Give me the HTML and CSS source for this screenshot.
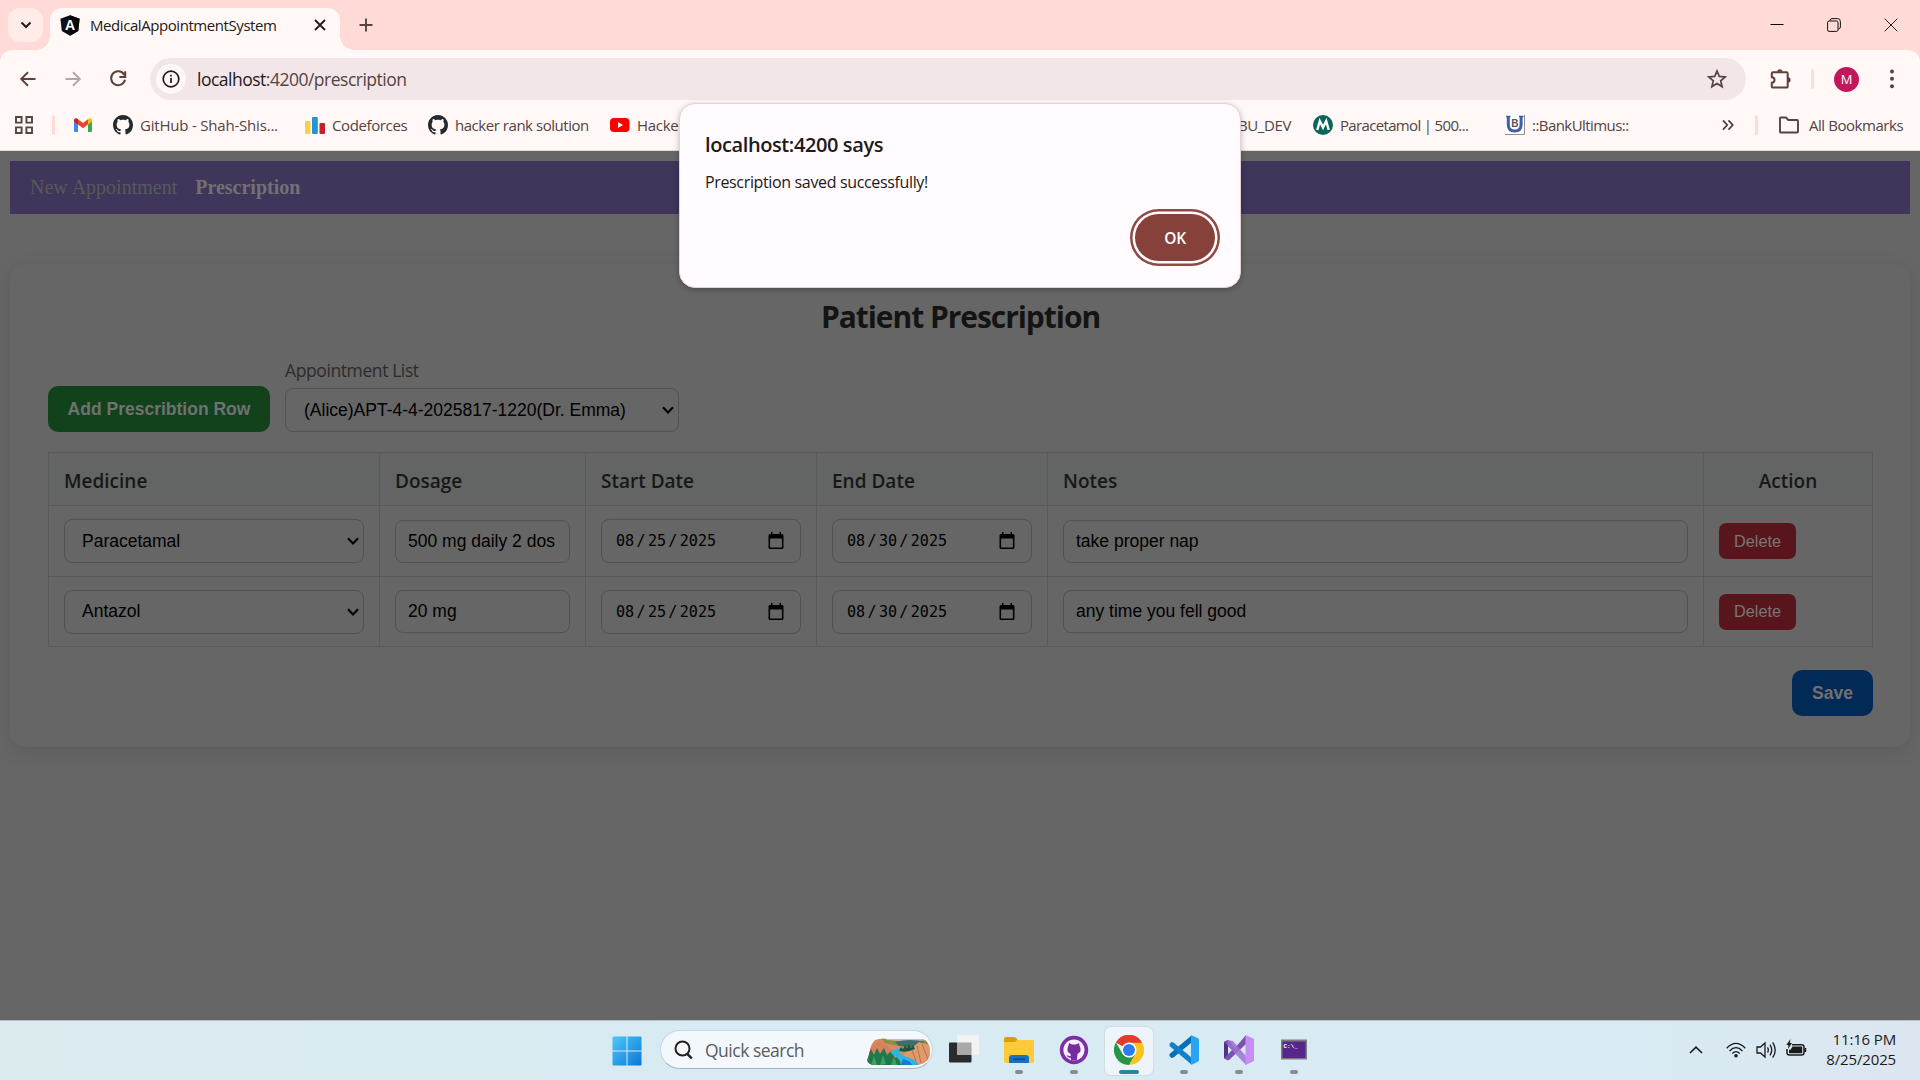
FILE: index.html
```html
<!DOCTYPE html>
<html lang="en">
<head>
<meta charset="utf-8">
<title>MedicalAppointmentSystem</title>
<link rel="stylesheet" href="styles.css">
</head>
<body>
<svg class="defs" aria-hidden="true">
  <symbol id="octocat" viewBox="0 0 16 16"><path d="M8 0C3.58 0 0 3.58 0 8c0 3.54 2.29 6.53 5.47 7.59.4.07.55-.17.55-.38 0-.19-.01-.82-.01-1.49-2.01.37-2.53-.49-2.69-.94-.09-.23-.48-.94-.82-1.13-.28-.15-.68-.52-.01-.53.63-.01 1.08.58 1.23.82.72 1.21 1.87.87 2.33.66.07-.52.28-.87.51-1.07-1.78-.2-3.64-.89-3.64-3.95 0-.87.31-1.59.82-2.15-.08-.2-.36-1.02.08-2.12 0 0 .67-.21 2.2.82.64-.18 1.32-.27 2-.27s1.36.09 2 .27c1.53-1.04 2.2-.82 2.2-.82.44 1.1.16 1.92.08 2.12.51.56.82 1.27.82 2.15 0 3.07-1.87 3.75-3.65 3.95.29.25.54.73.54 1.48 0 1.07-.01 1.93-.01 2.2 0 .21.15.46.55.38A8.01 8.01 0 0 0 16 8c0-4.42-3.58-8-8-8z"/></symbol>
  <symbol id="chevron" viewBox="0 0 12 8"><path d="M1 1.2 6 6.4l5-5.2" fill="none" stroke="#000" stroke-width="2.1"/></symbol>
  <symbol id="calendar" viewBox="0 0 16 18"><path d="M3 0h1.500v2h7V0H13v2h1q1.500 0 1.500 1.500v12q0 1.500-1.500 1.500H2Q.5 17 .5 15.500v-12Q.5 2 2 2h1zM2.100 6.500v8.900h11.800V6.500z" fill-rule="evenodd"/></symbol>
</svg>

<header class="browser">
  <div class="tabstrip">
    <span class="tab-search"><svg width="12" height="8" viewBox="0 0 12 8"><path d="M1.500 1.500 6 6l4.500-4.500" fill="none" stroke="#231917" stroke-width="2"/></svg></span>
    <div class="tab">
      <svg class="favicon" width="20" height="21" viewBox="0 0 20 21"><path d="M10 .3 19.600 3.700 18.200 16 10 20.700 1.800 16 .4 3.700z" fill="#0b0f18"/><path d="M10 .3 19.600 3.700 18.200 16 10 20.700z" fill="#020409"/><text x="10" y="15.200" text-anchor="middle" class="favicon-a">A</text></svg>
      <span class="tab-title">MedicalAppointmentSystem</span>
      <svg class="tab-close" width="12" height="12" viewBox="0 0 12 12"><path d="m1 1 10 10M11 1 1 11" stroke="#231917" stroke-width="1.800"/></svg>
    </div>
    <svg class="tab-new" width="14" height="14" viewBox="0 0 14 14"><path d="M7 .5v13M.5 7h13" stroke="#534341" stroke-width="1.900"/></svg>
    <div class="window-buttons">
      <svg width="14" height="14" viewBox="0 0 14 14"><path d="M.5 6.500h13" stroke="#000"/></svg>
      <svg width="14" height="14" viewBox="0 0 14 14"><g fill="none" stroke="#111"><rect x=".6" y="3" width="10.400" height="10.400" rx="1.500"/><path d="M3 2.500Q3.200.6 5 .6h5.500Q13.400.6 13.400 3.500V9q0 1.800-2 2"/></g></svg>
      <svg width="14" height="14" viewBox="0 0 14 14"><path d="m.7.7 12.600 12.600M13.300.7.7 13.300" stroke="#222"/></svg>
    </div>
  </div>

  <div class="toolbar">
    <svg class="nav-icon" width="20" height="20" viewBox="0 0 20 20"><path d="M17.500 10H3.500M10 3.300 3.200 10l6.800 6.700" fill="none" stroke="#5b403d" stroke-width="1.900"/></svg>
    <svg class="nav-icon" width="20" height="20" viewBox="0 0 20 20"><path d="M2.500 10h14M10 3.300 16.800 10 10 16.700" fill="none" stroke="#b3a5a3" stroke-width="1.900"/></svg>
    <svg class="nav-icon" width="20" height="20" viewBox="0 0 20 20"><path d="M16.300 5.900A7 7 0 1 0 17 10.800M17.200 2.300v5.600h-5.800" fill="none" stroke="#5b403d" stroke-width="2"/></svg>
    <div class="omnibox">
      <span class="site-info"><svg width="18" height="18" viewBox="0 0 18 18"><circle cx="9" cy="9" r="7.800" fill="none" stroke="#231917" stroke-width="1.700"/><path d="M9 8v5M9 4.800v1.800" stroke="#231917" stroke-width="1.700"/></svg></span>
      <span class="url"><b>localhost</b>:4200/prescription</span>
      <svg class="star" width="20" height="20" viewBox="0 0 20 20"><path d="m10 2 2.300 5.400 5.900.5-4.500 3.900 1.400 5.800-5.100-3.100-5.100 3.100 1.400-5.800L1.800 7.900l5.900-.5z" fill="none" stroke="#534341" stroke-width="1.700"/></svg>
    </div>
    <svg class="puzzle" width="22" height="22" viewBox="0 0 22 22"><path d="M3 4.200h13.500q1.200 0 1.200 1.200v13q0 1.200-1.200 1.200H3q-1.200 0-1.200-1.200v-3.700a2.700 2.700 0 0 0 0-5.400V5.400Q1.800 4.200 3 4.200z" fill="none" stroke="#5b403d" stroke-width="2"/><path d="M7.200 3.800a2.600 2.600 0 0 1 5.200 0zM18 9.300a2.600 2.600 0 0 1 0 5.200z" fill="#5b403d"/></svg>
    <i class="separator sep-toolbar"></i>
    <span class="avatar">M</span>
    <svg class="kebab" width="6" height="20" viewBox="0 0 6 20"><g fill="#5b403d"><circle cx="3" cy="2.500" r="2"/><circle cx="3" cy="9.800" r="2"/><circle cx="3" cy="17.200" r="2"/></g></svg>
  </div>

  <div class="bookmarks">
    <svg class="apps" width="18" height="18" viewBox="0 0 18 18"><g fill="none" stroke="#534341" stroke-width="1.900"><path d="M1 1h5.600v5.600H1zM11.400 1H17v5.600h-5.600zM1 11.400h5.600V17H1zM11.400 11.400H17V17h-5.600z"/></g></svg>
    <i class="separator sep-apps"></i>
    <svg class="gmail" width="18" height="14" viewBox="0 0 18 14"><path d="M0 2v10.700q0 1.300 1.300 1.300H4V5z" fill="#4285f4"/><path d="M18 2v10.700q0 1.300-1.300 1.300H14V5z" fill="#34a853"/><path d="M14 1.300V6.500l4-3V2q-.5-2.500-3-1.400z" fill="#fbbc04"/><path d="M4 1.300V6.500l-4-3V2Q.5-.5 3 .6z" fill="#c5221f"/><path d="M4 1.300 9 5l5-3.700v5.200l-5 3.700-5-3.700z" fill="#ea4335"/></svg>
    <a class="bm bm-github"><svg width="20" height="20" fill="#24292f"><use href="#octocat"/></svg><span>GitHub - Shah-Shis...</span></a>
    <a class="bm bm-codeforces"><svg width="20" height="20" viewBox="0 0 20 20"><rect y="6" width="5.500" height="13" rx="1" fill="#f8cf50"/><rect x="7" y="2" width="5.800" height="17" rx="1" fill="#2196d3"/><rect x="14.500" y="8" width="5.500" height="11" rx="1" fill="#c3202c"/></svg><span>Codeforces</span></a>
    <a class="bm bm-hacker"><svg width="20" height="20" fill="#24292f"><use href="#octocat"/></svg><span>hacker rank solution</span></a>
    <a class="bm bm-youtube"><svg width="20" height="20" viewBox="0 0 20 20"><rect y="3" width="19.500" height="14" rx="4" fill="#f00"/><path d="m8 7 5 3-5 3z" fill="#fff"/></svg><span>HackerRank</span></a>
    <a class="bm bm-dev"><span>BU_DEV</span></a>
    <a class="bm bm-para"><svg width="20" height="20" viewBox="0 0 20 20"><circle cx="10" cy="10" r="10" fill="#0b655a"/><path d="m4.300 15 2.500-9L10 12.500 13.200 6l2.500 9" fill="none" stroke="#fff" stroke-width="2.400"/></svg><span>Paracetamol | 500...</span></a>
    <a class="bm bm-bank"><svg width="20" height="20" viewBox="0 0 20 20"><path d="M0 0h20v20H0z" fill="#fff"/><path d="M19.500 0v19.500H0" fill="none" stroke="#8f9094"/><path d="M3.300 1v8.500q0 6.500 6.400 6.500t6.400-6.500V1" fill="none" stroke="#3f5fa8" stroke-width="3"/><path d="M1 1.500h4.500M14 1.500h4.500" stroke="#3f5fa8" stroke-width="1.500"/><text x="9.700" y="11.800" text-anchor="middle" class="bank-b">B</text></svg><span>::BankUltimus::</span></a>
    <svg class="overflow" width="12" height="12" viewBox="0 0 12 12"><path d="m1 1.300 4.200 4.700L1 10.700M6.500 1.300l4.200 4.700-4.200 4.700" fill="none" stroke="#534341" stroke-width="1.800"/></svg>
    <i class="separator sep-all"></i>
    <a class="bm bm-all"><svg width="20" height="18" viewBox="0 0 20 18"><path d="M1 15.500V2.500Q1 1.500 2 1.500h5l2.300 2.500H18q1 0 1 1v10.500q0 1-1 1H2q-1 0-1-1z" fill="none" stroke="#534341" stroke-width="1.900"/></svg><span>All Bookmarks</span></a>
  </div>
</header>

<main class="page">
  <nav class="site-nav"><a>New Appointment</a><a class="active">Prescription</a></nav>

  <section class="card">
    <h2 class="title"><span>Patient Prescription</span></h2>
    <div class="controls">
      <button class="btn btn-add">Add Prescribtion Row</button>
      <div class="picker">
        <label>Appointment List</label>
        <div class="field select">(Alice)APT-4-4-2025817-1220(Dr. Emma)<svg width="12" height="8"><use href="#chevron"/></svg></div>
      </div>
    </div>

    <table class="rx">
      <colgroup><col class="c-med"><col class="c-dose"><col class="c-date"><col class="c-date"><col class="c-notes"><col class="c-act"></colgroup>
      <thead><tr><th>Medicine</th><th>Dosage</th><th>Start Date</th><th>End Date</th><th>Notes</th><th class="center">Action</th></tr></thead>
      <tbody>
        <tr>
          <td><div class="field select">Paracetamal<svg width="12" height="8"><use href="#chevron"/></svg></div></td>
          <td><div class="field text">500 mg daily 2 dos</div></td>
          <td><div class="field date">08<i>/</i>25<i>/</i>2025<svg width="16" height="18"><use href="#calendar"/></svg></div></td>
          <td><div class="field date">08<i>/</i>30<i>/</i>2025<svg width="16" height="18"><use href="#calendar"/></svg></div></td>
          <td><div class="field text">take proper nap</div></td>
          <td><button class="btn-delete">Delete</button></td>
        </tr>
        <tr>
          <td><div class="field select">Antazol<svg width="12" height="8"><use href="#chevron"/></svg></div></td>
          <td><div class="field text">20 mg</div></td>
          <td><div class="field date">08<i>/</i>25<i>/</i>2025<svg width="16" height="18"><use href="#calendar"/></svg></div></td>
          <td><div class="field date">08<i>/</i>30<i>/</i>2025<svg width="16" height="18"><use href="#calendar"/></svg></div></td>
          <td><div class="field text">any time you fell good</div></td>
          <td><button class="btn-delete">Delete</button></td>
        </tr>
      </tbody>
    </table>
    <div class="actions"><button class="btn btn-save">Save</button></div>
  </section>
</main>

<div class="dialog" role="alertdialog">
  <h1><span>localhost:4200 says</span></h1>
  <p><span>Prescription saved successfully!</span></p>
  <button class="ok">OK</button>
</div>

<footer class="taskbar">
  <svg class="start" width="30" height="30" viewBox="0 0 30 30">
    <defs><linearGradient id="win" x1="0" y1="0" x2="1" y2="1" gradientUnits="objectBoundingBox"><stop offset="0" stop-color="#4cc8fb"/><stop offset="1" stop-color="#0a78d6"/></linearGradient></defs>
    <path d="M.5 1.500q0-1 1-1h13v14H.5zM15.500.5h13q1 0 1 1v13h-14zM.5 15.500h14v14h-13q-1 0-1-1zM15.500 15.500h14v13q0 1-1 1h-13z" fill="url(#win)"/></svg>
  <div class="search">
    <svg width="19" height="20" viewBox="0 0 19 20"><circle cx="8.500" cy="8.500" r="7" fill="none" stroke="#222" stroke-width="2"/><path d="m13.300 13.800 4.500 4.700" stroke="#222" stroke-width="2.500"/></svg>
    <span>Quick search</span>
    <svg class="landscape" width="63" height="27" viewBox="0 0 63 27">
      <defs><clipPath id="pic"><path d="M8 2q6-2 12-1l35 0q8 2 8 13 0 11-13 13H6q-5-1-6-5 2-4 3-10 1-6 5-10z"/></clipPath></defs>
      <g clip-path="url(#pic)"><path d="M0 0h63v27H0z" fill="#d98a5e"/><path d="M14 0h49v6q-20 6-45-1z" fill="#8b8f3f"/><path d="M18 0h45v2L40 3.500 20 2z" fill="#c5b9c8"/><path d="M28 4q15-4 30 0l-12 5-14-1z" fill="#3f6f6b"/><path d="M0 13 12 2l14 11 4 14H0z" fill="#d6805d"/><path d="M36 17 52 4l11 3v20H44z" fill="#e09a6a"/><path d="m50 8 4 17M55 6l6 15M45 12l4 11" stroke="#b9704f" stroke-width="1"/><path d="m0 27 1-10 3-6 3 6 3-7 3 6 4-6 3 7 4-4 4 7 4-3 3 10z" fill="#1e7a4e"/><path d="m4 27 3-9 3 9zM13 27l3-10 3 9zM24 27l3-8 3 8z" fill="#3ea05d"/><path d="M24 13q8-3 14-4-12 5 2 10 12 4 11 8H34q-1-6-6-9t-4-5z" fill="#2fb4e4"/><path d="M36 21q8 2 9 6H34z" fill="#1479cf"/><path d="m32 13 2-4 2 2 2-4 2 3 2-4 2 4 2-3 2 4q-8 4-16 2z" fill="#17583f"/></g></svg>
  </div>
  <svg class="taskview" width="31" height="29" viewBox="0 0 31 29"><rect y="8.500" width="22.500" height="20" rx="1" fill="#2b2b2b"/><rect x="8" y="1" width="22" height="20" rx="1" fill="#f2f2f2"/><path d="M8 8.500h14.500V21H8z" fill="#a9a9a9"/></svg>
  <div class="app"><svg width="30" height="30" viewBox="0 0 30 30"><path d="M0 4q0-2 2-2h8q2 0 3 2l1 2v4H0z" fill="#dc9e07"/><path d="M0 7h11l2-2h17v21q0 2-2 2H2q-2 0-2-2z" fill="#ffc93c"/><path d="M5 28v-5q0-3 3-3h14q3 0 3 3v5z" fill="#1273c8"/><path d="M9 24.300h12" stroke="#0b4784" stroke-width="1.500"/></svg><i></i></div>
  <div class="app"><svg width="30" height="30" viewBox="0 0 30 30"><circle cx="15" cy="15" r="14.200" fill="#7b2fa5"/><circle cx="15" cy="15" r="10.600" fill="#f7effa"/><path d="M9.500 10.500 10 8l3 1.500h4L20 8l.5 2.500q3 6-2 8.500l-.6 6.300h-5.800l-.3-2.500q-3 .5-4.300-2.500 2 0 2.500 1l1.800-.5-.3-2Q6.500 16.500 9.500 10.500z" fill="#752b9d"/></svg><i></i></div>
  <div class="app active"><svg width="30" height="30" viewBox="0 0 30 30"><path d="M15 15 2 7.500A15 15 0 0 1 28 7.500z" fill="#e33b2e"/><path d="M28 7.500A15 15 0 0 1 15 30l6.500-11.200L15 7.500z" fill="#fcc31e"/><path d="M15 30A15 15 0 0 1 2 7.500l6.500 11.300Q12 23 18 22.200L21.500 18.800z" fill="#269547"/><path d="M2 7.500A15 15 0 0 1 28 7.500H15L9 11z" fill="#e33b2e"/><circle cx="15" cy="15" r="7.500" fill="#fff"/><circle cx="15" cy="15" r="6" fill="#2f7cf0"/></svg><i></i></div>
  <div class="app"><svg width="30" height="30" viewBox="0 0 30 30"><path d="M22.500.5v7L4.500 22.500 2.500 23 .5 21V19z" fill="#0070b8"/><path d="m22.500 29.500v-7L4.500 7.500 2.500 7l-2 2v2z" fill="#1080cd"/><path d="M22 0v30l7-3.300q1-.6 1-2V5.300q0-1.400-1-2z" fill="#28a5f2"/></svg><i></i></div>
  <div class="app"><svg width="30" height="30" viewBox="0 0 30 30"><path d="m0 7 4-2v20l-4-2z" fill="#4e3183"/><path d="m3.500 5 3 1.500L11 13 22 0v9L5 25l-1.500.2-3.500-2L8 15 0 7z" fill="#7b52ae"/><path d="M3.500 5 9 6l13 15v9L4 11z" fill="#9d72d2" opacity=".85"/><path d="M21.500 0 30 4v22l-8.500 4z" fill="#c58df5"/></svg><i></i></div>
  <div class="app"><svg width="28" height="30" viewBox="0 0 28 30"><rect x="1" y="4.500" width="26" height="20" fill="#7c7c80"/><rect x="2.500" y="6.500" width="23" height="16.500" fill="#56268c"/><text x="3.500" y="13" class="prompt">C:\_</text></svg><i></i></div>
  <div class="tray">
    <svg class="caret" width="14" height="8" viewBox="0 0 14 8"><path d="m1 7 6-5.800L13 7" fill="none" stroke="#1b1b1b" stroke-width="1.600"/></svg>
    <svg class="wifi" width="20" height="16" viewBox="0 0 20 16"><g fill="none" stroke="#1b1b1b" stroke-width="1.300"><path d="M.7 6.200q9.300-9.500 18.600 0M3.500 9q6.500-6.600 13 0M6.200 11.600q3.800-3.800 7.600 0"/></g><circle cx="10" cy="13.700" r="1.800" fill="#1b1b1b"/></svg>
    <svg class="speaker" width="21" height="18" viewBox="0 0 21 18"><g fill="none" stroke="#1b1b1b" stroke-width="1.300"><path d="M1 6h3.500L9 2v14l-4.500-4H1z"/><path d="M11.500 6.300q1.700 2.700 0 5.400M14 3.700q3.500 5.300 0 10.600M16.700 1.300q5 7.700 0 15.400"/></g></svg>
    <svg class="battery" width="21" height="18" viewBox="0 0 21 18"><path d="M6 5.700h9.500q2.500 0 2.500 2v6q0 2.300-2.500 2.300H3.500Q1 16 1 13.700V10" fill="none" stroke="#1b1b1b" stroke-width="1.500"/><path d="M6.500 7.500h9.700v6.700H3v-3.500h1.500zM18.500 9h1.700v4h-1.700z" fill="#1b1b1b"/><path d="M4.500 0 .3 6h2.200L2 10l4-6H3.800z" fill="#1b1b1b"/></svg>
    <div class="clock"><span>11:16 PM</span><span>8/25/2025</span></div>
  </div>
</footer>
</body>
</html>
```
FILE: styles.css
```css
* { box-sizing: border-box; }
html, body { margin: 0; height: 100%; }
body {
  display: flex; flex-direction: column; width: 1920px; height: 1080px; overflow: hidden;
  background: #666; font-family: "Open Sans", sans-serif; font-stretch: 90%; color: #231917;
}
svg { display: block; flex: none; }
.defs { display: none; }
i { font-style: normal; }
button { border: 0; font-family: inherit; padding: 0; }

/* browser chrome */
.browser { height: 151px; flex: none; background: #ffdad6; border-bottom: 1px solid #e8d5d1; }
.tabstrip { display: flex; height: 50px; align-items: flex-start; padding: 8px 22px 0 8px; }
.tab-search { display: grid; place-items: center; width: 35px; height: 34px; border-radius: 12px; background: #ffece8; }
.tab { position: relative; display: flex; align-items: center; width: 290px; height: 42px; margin-left: 7px; padding: 0 14px 8px 10px; border-radius: 12px 12px 0 0; background: #fff8f6; }
.tab::before, .tab::after { content: ""; position: absolute; bottom: 0; width: 14px; height: 14px; }
.tab::before { left: -14px; background: radial-gradient(circle at 0 0, transparent 13.5px, #fff8f6 14px); }
.tab::after { right: -14px; background: radial-gradient(circle at 100% 0, transparent 13.5px, #fff8f6 14px); }
.favicon-a { font: bold 14px "Liberation Sans", sans-serif; fill: #fff; }
.tab-title { margin-left: 10px; width: 200px; font-size: 15px; letter-spacing: -.43px; white-space: nowrap; }
.tab-close { margin-left: auto; }
.tab-new { margin: 10px 0 0 19px; }
.window-buttons { display: flex; gap: 43px; margin: 10px 0 0 auto; }
.toolbar { display: flex; align-items: center; height: 50px; padding: 8px 25px 0 18px; border-radius: 12px 12px 0 0; background: #fff8f6; }
.nav-icon { margin-right: 25px; }
.omnibox { display: flex; align-items: center; width: 1597px; height: 42px; padding: 0 19px 0 6px; border-radius: 21px; background: #f2e6e8; margin-left: -3px; }
.site-info { display: grid; place-items: center; width: 30px; height: 30px; border-radius: 50%; background: #fff8f6; }
.url { margin-left: 11px; font-size: 17.5px; letter-spacing: -.5px; color: #534341; }
.url b { font-weight: 400; color: #231917; }
.star { margin-left: auto; }
.puzzle { margin-left: 24px; }
.separator { width: 3px; height: 20px; border-radius: 2px; background: #ffdad6; }
.sep-toolbar { margin-left: 19px; }
.avatar { display: grid; place-items: center; width: 25px; height: 25px; margin-left: 20px; border-radius: 50%; background: #c2185b; color: #fff; font-size: 13px; }
.kebab { margin-left: 30px; }
.bookmarks { display: flex; align-items: center; height: 50px; padding-left: 15px; background: #fff8f6; font-size: 15px; color: #534341; white-space: nowrap; }
.sep-apps { margin-left: 19px; }
.gmail { margin-left: 19px; }
.bm { display: flex; align-items: center; gap: 7px; flex: none; }
.bm span { padding-bottom: 1px; }
.bm-github { width: 192px; margin-left: 21px; letter-spacing: -.2px; }
.bm-codeforces { width: 123px; letter-spacing: -.38px; }
.bm-hacker { width: 182px; letter-spacing: -.46px; }
.bm-youtube { width: 628px; letter-spacing: -.3px; }
.bm-dev { width: 75px; letter-spacing: -.4px; }
.bm-para { width: 192px; letter-spacing: -.66px; }
.bm-bank { width: 217px; letter-spacing: -.56px; }
.bank-b { font: bold 10px "Liberation Sans", sans-serif; fill: #555; }
.sep-all { margin-left: 21px; }
.bm-all { margin-left: 21px; gap: 10px; letter-spacing: -.45px; }

/* application page */
.page { flex: 1; padding: 10px; }
.site-nav { display: flex; align-items: center; height: 53px; padding-left: 20px; gap: 18px; background: #40355a; font: 20px "Liberation Serif", serif; color: #565a58; }
.site-nav .active { font-weight: 700; color: #717171; }
.card { height: 483px; margin-top: 50px; padding: 32px 37px 0 38px; border-radius: 15px; background: #666; box-shadow: 0 5px 19px rgba(0,0,0,.1); }
.title { margin: 0; height: 42px; text-align: center; font-size: 30px; line-height: 41px; letter-spacing: -1.05px; font-weight: 700; color: #141414; }
.controls { display: flex; align-items: flex-end; gap: 15px; margin-top: 18px; }
.btn { height: 46px; border-radius: 10px; font: bold 17.5px "Liberation Sans", sans-serif; color: #717171; }
.btn-add { width: 222px; background: #11421c; }
.picker { width: 394px; }
.picker label { display: block; height: 30px; margin-top: 2px; font-size: 17.5px; line-height: 24px; letter-spacing: -.4px; color: #2c2c2c; }
.field { display: flex; align-items: center; height: 44px; border: 1px solid #525252; border-radius: 8px; font: 17.5px "Liberation Sans", sans-serif; color: #000; white-space: nowrap; }
.select { padding: 0 4px 0 18px; }
.rx .select { padding-left: 17px; }
.select svg, .date svg { margin-left: auto; }
.text { height: 43px; padding-left: 12px; }
.date { padding: 0 16px 0 14px; font: 15.1px "DejaVu Sans Mono", monospace; }
.date i { margin: 0 2.3px; }
.rx { width: 1825px; margin-top: 20px; border-collapse: collapse; table-layout: fixed; }
.c-med { width: 331px; } .c-dose { width: 206px; } .c-date { width: 231px; } .c-notes { width: 656px; } .c-act { width: 169px; }
.rx th, .rx td { border: 1px solid #5a5a5a; padding: 0 15px; }
.rx th { height: 53px; padding-top: 4px; background: #626564; text-align: left; font-size: 19px; font-weight: 600; color: #171717; }
.rx th.center { text-align: center; }
.rx td { height: 71px; }
.rx tbody tr:last-child td { height: 70px; }
.btn-delete { display: block; width: 77px; height: 36px; border-radius: 7px; background: #58151c; color: #777; font: 16.25px "Liberation Sans", sans-serif; }
.actions { display: flex; justify-content: flex-end; margin-top: 23px; }
.btn-save { width: 81px; background: #022a57; }

/* alert dialog, laid over the page */
.dialog { position: absolute; left: 679px; top: 103px; width: 562px; height: 185px; padding: 26px 25px 0; border: 1px solid #e4d3d1; border-radius: 16px; background: #fffbff; box-shadow: 0 2px 6px rgba(0,0,0,.25); }
.dialog h1 { margin: 0; height: 30px; line-height: 30px; font-size: 20px; font-weight: 550; letter-spacing: -.4px; }
.dialog p { margin: 11px 0 0; height: 22px; line-height: 22px; font-size: 16px; letter-spacing: -.35px; }
.ok { display: block; width: 80px; height: 47px; margin: 21px 0 0 430px; border-radius: 24px; background: #86413b; box-shadow: 0 0 0 2.5px #fffbff, 0 0 0 5px #904a43; color: #fff; font-size: 15.5px; font-weight: 600; letter-spacing: -.2px; }

/* taskbar */
.taskbar { display: flex; align-items: center; height: 60px; flex: none; border-top: 1px solid #b4c2c8; background: linear-gradient(90deg, #dcebee, #d8eaf2 35%, #d8eaf3 85%, #dce6f0); }
.start { margin-left: 612px; }
.search { display: flex; align-items: center; width: 273px; height: 39px; margin: -2px 0 0 18px; padding: 0 2px 0 13px; border: 1px solid #c5d6df; border-bottom-color: #a5b5bf; border-radius: 20px; background: #f3f8fc; }
.search span { margin-left: 12px; font-size: 17.5px; letter-spacing: -.5px; color: #5b5d60; }
.landscape { margin: 3px 0 0 auto; }
.taskview { margin-left: 16px; margin-top: -4px; }
.app { position: relative; display: grid; place-items: center; width: 48px; height: 48px; margin-left: 7px; }
.app svg { margin-top: -2px; }
.taskview + .app { margin-left: 15px; }
.app.active { border-radius: 6px; background: #edf4fa; box-shadow: 0 0 0 1px #cfdde5; }
.app i { position: absolute; left: 20px; bottom: 1px; width: 8px; height: 4px; border-radius: 2px; background: #858d91; }
.app.active i { left: 14px; width: 20px; background: #27869a; }
.tray { display: flex; align-items: center; margin: -2px 25px 0 auto; }
.wifi { margin-left: 23px; }
.speaker { margin-left: 10px; }
.battery { margin-left: 9px; margin-top: -3px; }
.clock { display: flex; flex-direction: column; align-items: flex-end; width: 89px; margin: -2px -1px 0 0; font-size: 15px; line-height: 20px; letter-spacing: -.15px; color: #1b1b1b; }
.prompt { font: bold 6px "Liberation Mono", monospace; fill: #fff; }
```
